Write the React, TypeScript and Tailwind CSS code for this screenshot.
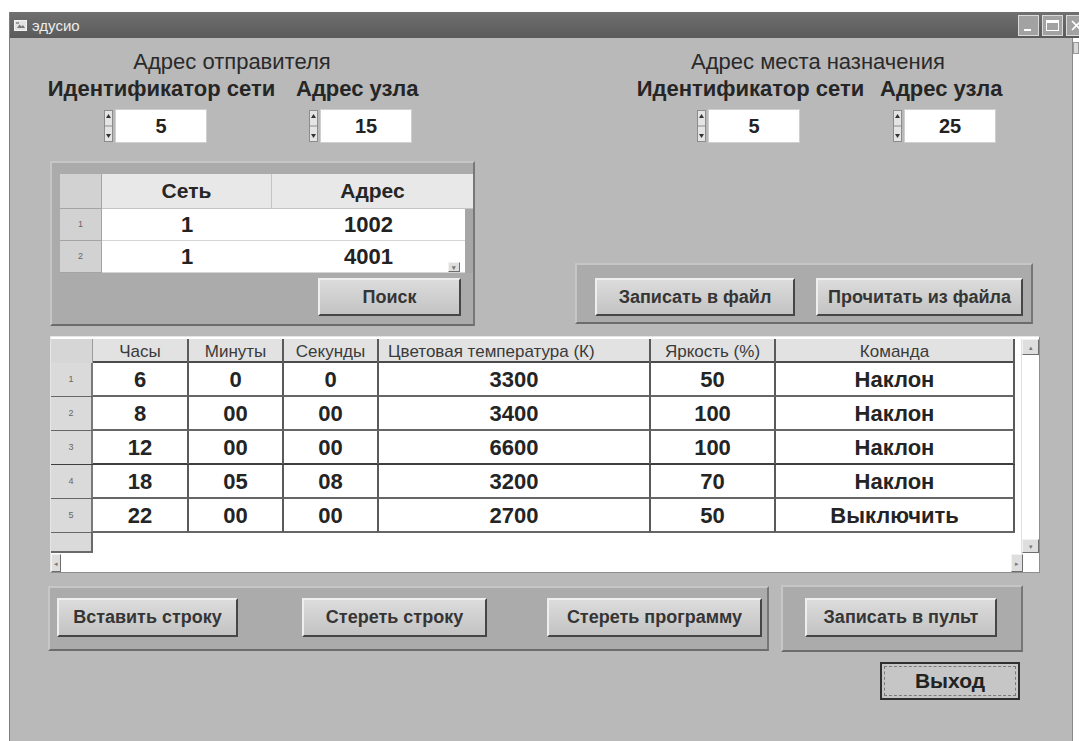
import type { ReactNode } from "react";

const schedule = [
  { h: "6", m: "0", s: "0", temp: "3300", bright: "50", cmd: "Наклон" },
  { h: "8", m: "00", s: "00", temp: "3400", bright: "100", cmd: "Наклон" },
  { h: "12", m: "00", s: "00", temp: "6600", bright: "100", cmd: "Наклон" },
  { h: "18", m: "05", s: "08", temp: "3200", bright: "70", cmd: "Наклон" },
  { h: "22", m: "00", s: "00", temp: "2700", bright: "50", cmd: "Выключить" },
];

const routes = [
  { net: "1", addr: "1002" },
  { net: "1", addr: "4001" },
];

const cols = "grid grid-cols-[42px_96px_95px_95px_272px_125px_239px]";

function Btn({ children, className = "" }: { children: ReactNode; className?: string }) {
  return (
    <button
      className={`flex items-center justify-center border-2 border-t-[#eeeeee] border-l-[#eeeeee] border-r-[#464646] border-b-[#464646] bg-linear-to-b from-[#dcdcdc] to-[#c3c3c3] text-[18px] font-bold text-[#353535] ${className}`}
    >
      {children}
    </button>
  );
}

function Panel({ children, className = "" }: { children: ReactNode; className?: string }) {
  return (
    <div
      className={`border-2 border-t-[#c6c6c6] border-l-[#c6c6c6] border-r-[#777777] border-b-[#6c6c6c] bg-[#ababab] ${className}`}
    >
      {children}
    </div>
  );
}

function SpinArrows() {
  return (
    <svg width="11" height="34" viewBox="0 0 11 34">
      <rect x="1.5" y="1.5" width="8" height="31" fill="#e4e4e4" stroke="#8c8c8c" />
      <line x1="2" y1="17" x2="9" y2="17" stroke="#8c8c8c" />
      <path d="M5.5 5 L8 9 L3 9 Z" fill="#333" />
      <path d="M5.5 29 L8 25 L3 25 Z" fill="#333" />
    </svg>
  );
}

function Field({ label, value, width, offset }: { label: string; value: string; width: string; offset: string }) {
  return (
    <div className={`flex flex-col ${width}`}>
      <div className="h-[27px] text-center text-[22px] leading-[27px] font-bold whitespace-nowrap text-[#262626]">{label}</div>
      <div className={`mt-[7px] flex h-[34px] ${offset}`}>
        <SpinArrows />
        <div className="ml-[1px] flex w-[92px] items-center justify-center border border-[#cfcfcf] bg-white text-[20px] font-bold text-[#222]">
          {value}
        </div>
      </div>
    </div>
  );
}

function AddressGroup({ title, children, className = "" }: { title: string; children: ReactNode; className?: string }) {
  return (
    <div className={`flex flex-col items-center ${className}`}>
      <div className="h-[26px] text-[22px] leading-[26px] whitespace-nowrap text-[#2a2a2a]">{title}</div>
      <div className="flex">{children}</div>
    </div>
  );
}

function ScrollBox({ glyph, className = "" }: { glyph: string; className?: string }) {
  return (
    <div
      className={`flex items-center justify-center border border-t-[#f2f2f2] border-l-[#f2f2f2] border-r-[#6e6e6e] border-b-[#6e6e6e] bg-[#dedede] text-[7px] leading-none text-[#777] ${className}`}
    >
      {glyph}
    </div>
  );
}

function RouteTable() {
  return (
    <div className="flex w-[413px] flex-col">
      <div className="flex h-[35px] text-[21px] font-bold text-[#262626]">
        <div className="w-[42px] border-r border-b border-[#a4a4a4] bg-[#d2d2d2]" />
        <div className="flex w-[170px] items-center justify-center border-r border-b border-[#c4c4c4] bg-[#e8e8e8]">Сеть</div>
        <div className="flex w-[201px] items-center justify-center border-b border-[#c4c4c4] bg-[#e8e8e8]">Адрес</div>
      </div>
      {routes.map((r, i) => (
        <div key={i} className="relative flex h-[32px] text-[22px] font-bold text-[#222]">
          <div className="flex w-[42px] items-center justify-center border-r border-b border-[#a4a4a4] bg-[#d2d2d2] text-[9px] font-normal text-[#666]">
            {i + 1}
          </div>
          <div className="flex w-[170px] items-center justify-center border-b border-[#d4d4d4] bg-white">{r.net}</div>
          <div className="flex w-[193px] items-center justify-center border-b border-[#d4d4d4] bg-white">{r.addr}</div>
          <div className="w-[8px] bg-[#a6a6a6]" />
          {i === routes.length - 1 && <ScrollBox glyph="▾" className="absolute right-[13px] bottom-[1px] h-[10px] w-[12px]" />}
        </div>
      ))}
    </div>
  );
}

function ScheduleTable() {
  const heads = ["Часы", "Минуты", "Секунды"];
  return (
    <div className="mt-[10px] ml-[40px] flex h-[237px] w-[990px] flex-col border border-t-[#e6e6e6] border-l-[#e6e6e6] border-r-[#8e8e8e] border-b-[#8e8e8e] bg-white">
      <div className="flex flex-1 pt-[2px]">
        <div className="flex w-[964px] flex-col">
          <div className={`${cols} h-[24px] border-b-2 border-[#4c4c4c] bg-[#e2e2e2] text-[17px] text-[#3a3a3a]`}>
            <div className="border-r border-[#9c9c9c] bg-[#d6d6d6]" />
            {heads.map((h) => (
              <div key={h} className="flex items-center justify-center border-r-2 border-[#5a5a5a]">
                {h}
              </div>
            ))}
            <div className="flex items-center border-r-2 border-[#5a5a5a] pl-[9px] whitespace-nowrap">Цветовая температура (К)</div>
            <div className="flex items-center justify-center border-r-2 border-[#5a5a5a]">Яркость (%)</div>
            <div className="flex items-center justify-center border-r-2 border-[#5a5a5a]">Команда</div>
          </div>
          {schedule.map((r, i) => (
            <div
              key={i}
              className={`${cols} h-[34px] border-b-2 ${i === 2 ? "border-[#3e3e3e]" : "border-[#666666]"} text-[22px] font-bold text-[#242424]`}
            >
              <div className="flex items-center justify-center border-r-2 border-[#7a7a7a] bg-[#dadada] text-[9px] font-normal text-[#666]">
                {i + 1}
              </div>
              {[r.h, r.m, r.s, r.temp, r.bright, r.cmd].map((v, j) => (
                <div key={j} className="flex items-center justify-center border-r-2 border-[#5a5a5a]">
                  {v}
                </div>
              ))}
            </div>
          ))}
          <div className="h-[20px] w-[42px] border-r-2 border-b-2 border-[#6a6a6a] bg-[#dadada]" />
        </div>
        <div className="w-[6px]" />
        <div className="flex w-[18px] flex-col justify-between border-l border-[#e0e0e0] pb-[1px]">
          <ScrollBox glyph="▴" className="h-[16px]" />
          <ScrollBox glyph="▾" className="h-[14px]" />
        </div>
      </div>
      <div className="flex h-[18px] w-[972px]">
        <ScrollBox glyph="◂" className="w-[10px]" />
        <div className="flex-1" />
        <ScrollBox glyph="▸" className="w-[12px]" />
      </div>
    </div>
  );
}

function TitleBar() {
  return (
    <div className="flex h-[26px] items-center bg-linear-to-b from-[#707070] to-[#5a5a5a] pl-[4px]">
      <svg width="13" height="11" viewBox="0 0 13 11">
        <rect x="0.5" y="0.5" width="12" height="10" fill="#e2e2e2" stroke="#f4f4f4" />
        <path d="M3 8 L5.5 4.5 L7.5 6.5 L9 5 L11 8 Z" fill="#7a7a7a" />
        <rect x="2" y="2" width="3" height="2" fill="#9a9a9a" />
      </svg>
      <span className="ml-[5px] text-[15px] leading-none text-[#ececec]">эдусио</span>
      <div className="-mr-[8px] ml-auto flex gap-[3px]">
        <div className="relative h-[21px] w-[21px] border border-[#dadada] bg-[#a2a2a2]">
          <div className="absolute bottom-[4px] left-[5px] h-[2px] w-[7px] bg-white" />
        </div>
        <div className="flex h-[21px] w-[21px] items-center justify-center border border-[#dadada] bg-[#a2a2a2]">
          <div className="h-[11px] w-[13px] border border-t-[3px] border-white" />
        </div>
        <div className="flex h-[21px] w-[21px] items-center justify-center border border-[#dadada] bg-[#a2a2a2]">
          <svg width="11" height="11" viewBox="0 0 11 11">
            <path d="M1 1 L10 10 M10 1 L1 10" stroke="#fff" strokeWidth="1.6" />
          </svg>
        </div>
      </div>
    </div>
  );
}

export default function App() {
  return (
    <div className="h-[741px] w-[1079px] overflow-hidden bg-white font-['Liberation_Sans',Arial,sans-serif] text-[#2a2a2a]">
      <div className="mt-[12px] ml-[9px] flex h-[729px] flex-col overflow-hidden border-l border-[#7e7e7e]">
        <TitleBar />
        <div className="flex flex-1 bg-[#b9b9b9]">
          <div className="flex w-[1062px] flex-col">
            {/* sender / destination addresses */}
            <div className="flex pt-[11px]">
              <AddressGroup title="Адрес отправителя" className="ml-[36px]">
                <Field label="Идентификатор сети" value="5" width="w-[231px]" offset="ml-[57px]" />
                <Field label="Адрес узла" value="15" width="ml-[19px] w-[122px]" offset="ml-[12px]" />
              </AddressGroup>
              <AddressGroup title="Адрес места назначения" className="ml-[218px]">
                <Field label="Идентификатор сети" value="5" width="w-[229px]" offset="ml-[60px]" />
                <Field label="Адрес узла" value="25" width="ml-[15px] w-[120px]" offset="ml-[12px]" />
              </AddressGroup>
            </div>

            <div className="mt-[18px] flex items-end">
              <Panel className="ml-[40px] flex h-[165px] w-[425px] flex-col pt-[11px] pl-[8px]">
                <RouteTable />
                <Btn className="mt-[5px] mr-[12px] h-[38px] w-[143px] self-end">Поиск</Btn>
              </Panel>
              <Panel className="mb-[2px] ml-[100px] flex h-[61px] w-[458px] pt-[13px] pl-[18px]">
                <Btn className="h-[38px] w-[200px]">Записать в файл</Btn>
                <Btn className="ml-[21px] h-[38px] w-[207px]">Прочитать из файла</Btn>
              </Panel>
            </div>

            <ScheduleTable />

            <div className="mt-[13px] flex items-start">
              <Panel className="ml-[38px] flex h-[65px] w-[721px] pt-[10px] pl-[7px]">
                <Btn className="h-[39px] w-[181px]">Вставить строку</Btn>
                <Btn className="ml-[64px] h-[39px] w-[185px]">Стереть строку</Btn>
                <Btn className="ml-[60px] h-[39px] w-[215px]">Стереть программу</Btn>
              </Panel>
              <Panel className="-mt-[1px] ml-[12px] flex h-[67px] w-[242px] pt-[11px] pl-[22px]">
                <Btn className="h-[39px] w-[192px]">Записать в пульт</Btn>
              </Panel>
            </div>

            <div className="mt-[10px] ml-[870px] flex h-[38px] w-[140px] items-center justify-center border-2 border-[#2e2e2e] bg-[#c6c6c6] p-[2px]">
              <div className="flex h-full w-full items-center justify-center border border-dashed border-[#7a7a7a] text-[21px] font-bold text-[#222]">
                Выход
              </div>
            </div>
          </div>
          {/* window's own scrollbar, mostly off-screen */}
          <div className="w-[7px] border-l border-[#8a8a8a] bg-white">
            <div className="mt-[4px] h-[12px] border border-[#999] bg-[#d8d8d8]" />
          </div>
        </div>
      </div>
    </div>
  );
}
